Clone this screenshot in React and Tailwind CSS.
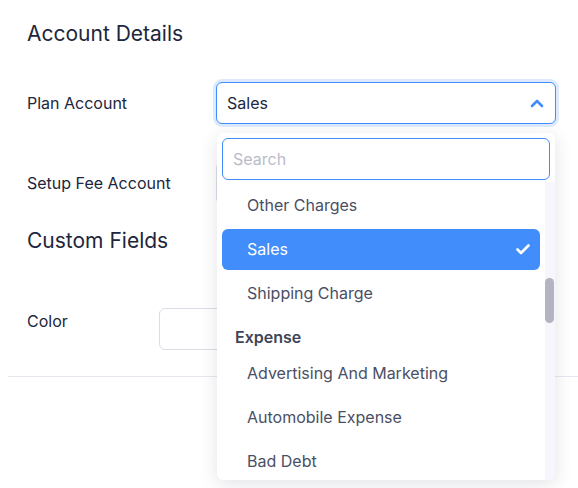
import React from "react";

const Option = ({ children, selected }) => (
  <div
    className={
      "h-[41px] shrink-0 rounded-[6px] pl-[25px] pr-[10px] pb-[2px] flex items-center justify-between text-[16px] " +
      (selected ? "bg-[#408dfb] text-white" : "text-[#4a4f63]")
    }
  >
    <span>{children}</span>
    {selected && (
      <svg width="14" height="11" viewBox="0 0 14 11" fill="none" className="mt-[1px]">
        <path d="M1.5 5.5 L5 9 L12.5 1.5" stroke="white" strokeWidth="2.6" strokeLinecap="round" strokeLinejoin="round" />
      </svg>
    )}
  </div>
);

export default function App() {
  return (
    <div className="w-[578px] h-[488px] bg-white overflow-hidden relative font-['Inter',sans-serif] text-[#21263c]">
      <div className="pl-[27px] pr-[22px] pt-[20px]">
        <h2 className="text-[21px] leading-[28px]">Account Details</h2>

        <div className="mt-[34px] flex items-center">
          <div className="w-[189px] text-[16px]">Plan Account</div>
          <div className="relative w-[340px] z-10">
            <div className="h-[42px] rounded-[6px] border border-[#408dfb] shadow-[0_0_0_3px_rgba(64,141,251,0.18)] flex items-center justify-between pl-[10px] pr-[11px] text-[16px] bg-white">
              <span>Sales</span>
              <svg width="14" height="9" viewBox="0 0 14 9" fill="none">
                <path d="M2 7 L7 2 L12 7" stroke="#408dfb" strokeWidth="2.6" strokeLinecap="round" strokeLinejoin="round" />
              </svg>
            </div>

            <div className="absolute top-[51px] left-[1px] right-[1px] bg-white rounded-[6px] shadow-[0_4px_18px_rgba(33,38,60,0.13)] pt-[5px] flex flex-col overflow-hidden">
              <div className="mx-[5px] h-[42px] rounded-[6px] border border-[#408dfb] flex items-center pl-[10px] text-[16px] text-[#b9bbca]">
                Search
              </div>
              <div className="mt-[2px] h-[298px] flex overflow-hidden">
                <div className="flex-1 pl-[5px] pr-[5px] pt-[3px] flex flex-col gap-[3px]">
                  <Option>Other Charges</Option>
                  <Option selected>Sales</Option>
                  <Option>Shipping Charge</Option>
                  <div className="h-[33px] shrink-0 pt-[6px] pl-[13px] flex items-center text-[16px] font-semibold text-[#3f4458]">
                    Expense
                  </div>
                  <Option>Advertising And Marketing</Option>
                  <Option>Automobile Expense</Option>
                  <Option>Bad Debt</Option>
                </div>
                <div className="w-[10px] bg-[#f6f6fc] relative shrink-0">
                  <div className="absolute top-[96px] left-0 w-[9px] h-[45px] rounded-full bg-[#b4b3c0]" />
                </div>
              </div>
            </div>
          </div>
        </div>

        <div className="mt-[38px] flex items-center h-[42px]">
          <div className="w-[189px] text-[16px]">Setup Fee Account</div>
          <div className="w-[320px] h-[42px] rounded-[6px] border border-[#dcdbe6]" />
        </div>

        <h2 className="mt-[23px] text-[21px] leading-[28px]">Custom Fields</h2>

        <div className="mt-[53px] flex items-start">
          <div className="w-[132px] text-[16px] leading-[22px] pt-[2px]">Color</div>
          <div className="w-[300px] h-[42px] rounded-[6px] border border-[#dcdbe6]" />
        </div>
      </div>
      <div className="mt-[26px] ml-[8px] h-px bg-[#e8e7f0]" />
    </div>
  );
}
